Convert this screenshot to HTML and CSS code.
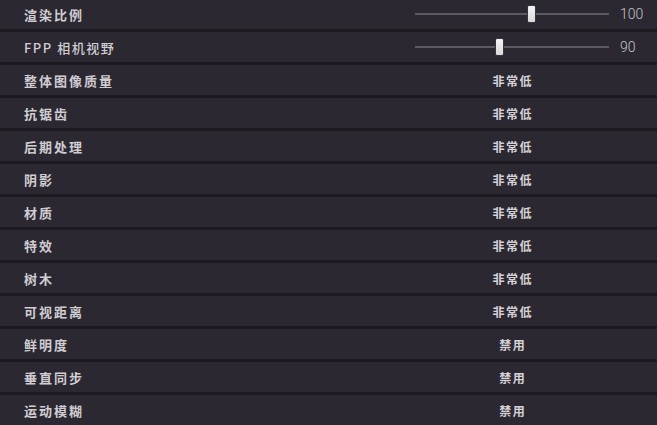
FILE: index.html
```html
<!DOCTYPE html>
<html lang="zh-CN">
<head>
<meta charset="utf-8">
<link rel="stylesheet" href="styles.css">
</head>
<body>
<div class="list">
  <div class="row">
    <div class="label">渲染比例</div>
    <div class="control"><div class="slider"><div class="track"></div><div class="thumb" style="left: 60%"></div></div></div>
    <div class="num">100</div>
  </div>
  <div class="row">
    <div class="label light">FPP 相机视野</div>
    <div class="control"><div class="slider"><div class="track"></div><div class="thumb" style="left: 43.5%"></div></div></div>
    <div class="num">90</div>
  </div>
  <div class="row"><div class="label">整体图像质量</div><div class="control value">非常低</div><div class="num"></div></div>
  <div class="row"><div class="label">抗锯齿</div><div class="control value">非常低</div><div class="num"></div></div>
  <div class="row"><div class="label">后期处理</div><div class="control value">非常低</div><div class="num"></div></div>
  <div class="row"><div class="label">阴影</div><div class="control value">非常低</div><div class="num"></div></div>
  <div class="row"><div class="label">材质</div><div class="control value">非常低</div><div class="num"></div></div>
  <div class="row"><div class="label">特效</div><div class="control value">非常低</div><div class="num"></div></div>
  <div class="row"><div class="label">树木</div><div class="control value">非常低</div><div class="num"></div></div>
  <div class="row"><div class="label">可视距离</div><div class="control value">非常低</div><div class="num"></div></div>
  <div class="row"><div class="label">鲜明度</div><div class="control value">禁用</div><div class="num"></div></div>
  <div class="row"><div class="label">垂直同步</div><div class="control value">禁用</div><div class="num"></div></div>
  <div class="row"><div class="label">运动模糊</div><div class="control value">禁用</div><div class="num"></div></div>
</div>
</body>
</html>
```
FILE: styles.css
```css
html, body {
  margin: 0;
  padding: 0;
  background: #1c1a20;
  overflow: hidden;
}
body {
  width: 657px;
  height: 425px;
  font-family: "Noto Sans CJK SC", "Noto Sans", sans-serif;
}
.list {
  display: flex;
  flex-direction: column;
  gap: 3px;
  margin-top: -1px;
}
.row {
  height: 30px;
  background: #2c2831;
  display: grid;
  grid-template-columns: 380px 194px 1fr;
  column-gap: 11px;
  align-items: center;
  padding-left: 24px;
}
.label {
  color: #cfcdd2;
  font-size: 13px;
  font-weight: 700;
  letter-spacing: 2px;
}
.label.light {
  font-weight: 500;
  letter-spacing: 1.5px;
}
.control.value {
  text-align: center;
  color: #d4d2d6;
  font-size: 12px;
  font-weight: 700;
  letter-spacing: 1.5px;
  padding-left: 1.5px;
}
.slider {
  position: relative;
  height: 30px;
}
.track {
  position: absolute;
  left: 0;
  right: 0;
  top: 14px;
  height: 2px;
  background: #5d5963;
}
.thumb {
  position: absolute;
  top: 6px;
  width: 9px;
  height: 18px;
  margin-left: -4px;
  background: linear-gradient(#f4f4f4, #d9d9d9);
  border: 1px solid #3a3640;
  border-radius: 2px;
  box-sizing: border-box;
}
.num {
  color: #c4c2c7;
  font-family: "Roboto", "Noto Sans", sans-serif;
  font-size: 14px;
  font-weight: 300;
}
```
